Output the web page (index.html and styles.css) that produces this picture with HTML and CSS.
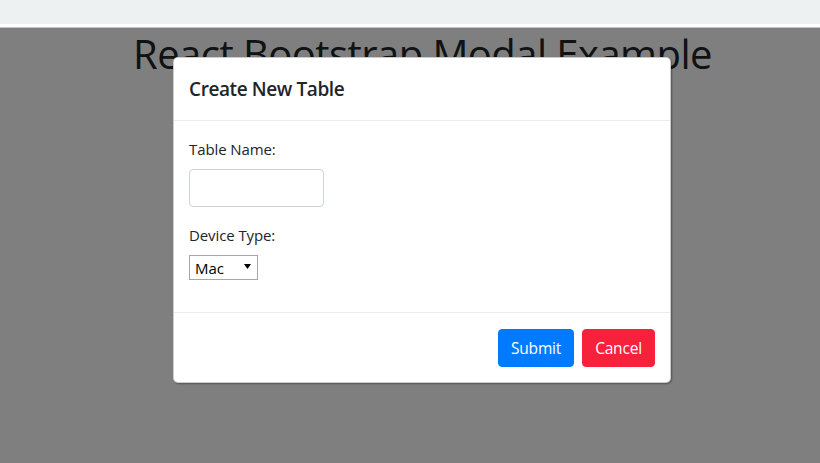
FILE: index.html
```html
<!DOCTYPE html>
<html lang="en">
<head>
<meta charset="utf-8">
<title>React Bootstrap Modal Example</title>
<link rel="stylesheet" href="styles.css">
</head>
<body>
<div class="topbar"></div>
<div class="stage">
  <h1 class="title">React Bootstrap Modal Example</h1>
  <div class="backdrop"></div>
  <div class="modal">
    <div class="modal-header">
      <h5 class="modal-title">Create New Table</h5>
    </div>
    <div class="modal-body">
      <div class="form-group">
        <label class="label" for="tname">Table Name:</label>
        <input class="text-input" id="tname" type="text">
      </div>
      <div class="form-group">
        <label class="label" for="dtype">Device Type:</label>
        <span class="select-wrap">
          <select class="select" id="dtype">
            <option>Mac</option>
            <option>Windows</option>
            <option>Linux</option>
          </select>
          <svg class="select-arrow" width="7" height="5" viewBox="0 0 7 5"><path d="M0 0H7L3.5 5Z" fill="#000"/></svg>
        </span>
      </div>
    </div>
    <div class="modal-footer">
      <button class="btn btn-primary" type="button">Submit</button>
      <button class="btn btn-danger" type="button">Cancel</button>
    </div>
  </div>
</div>
</body>
</html>
```
FILE: styles.css
```css
html, body {
  margin: 0;
  padding: 0;
  height: 100%;
  overflow: hidden;
}
body {
  font-family: "Open Sans", "Noto Sans", sans-serif;
  color: #212529;
  background: #fff;
}
.topbar {
  height: 24px;
  background: #eef1f2;
  border-bottom: 3px solid #fff;
}
.stage {
  position: relative;
  height: calc(100% - 27px);
  background: #fff;
  border-top: 1px solid #c4c4c4;
  box-sizing: border-box;
}
.title {
  margin: 0;
  padding: 2px 0 0 25px;
  text-align: center;
  font-size: 40px;
  font-weight: 400;
  line-height: 48px;
  letter-spacing: -0.55px;
  color: #212529;
}
.backdrop {
  position: absolute;
  inset: 0;
  background: rgba(0, 0, 0, 0.5);
}
.modal {
  position: absolute;
  top: 29px;
  left: 173px;
  width: 498px;
  background: #fff;
  border: 1px solid rgba(0, 0, 0, 0.2);
  border-radius: 5px;
  box-sizing: border-box;
  box-shadow: 1px 1px 2px rgba(0, 0, 0, 0.35);
}
.modal-header {
  padding: 16px 15px;
  border-bottom: 1px solid #e9ecef;
}
.modal-title {
  margin: 0;
  font-size: 19px;
  font-weight: 600;
  line-height: 30px;
  letter-spacing: -0.4px;
}
.modal-body {
  padding: 16px 15px;
}
.form-group {
  margin-bottom: 16px;
}
.label {
  display: block;
  margin-bottom: 8px;
  font-size: 15px;
  line-height: 24px;
  letter-spacing: -0.1px;
}
.text-input {
  display: block;
  box-sizing: border-box;
  width: 135px;
  height: 38px;
  padding: 6px 12px;
  border: 1px solid #ced4da;
  border-radius: 4px;
  font: inherit;
}
.select-wrap {
  position: relative;
  display: inline-block;
  vertical-align: top;
}
.select {
  -webkit-appearance: none;
  appearance: none;
  display: block;
  box-sizing: border-box;
  width: 69px;
  height: 25px;
  padding: 0 0 0 5px;
  border: 1px solid #a6a6a6;
  border-radius: 0;
  background: #fff;
  font-family: "Open Sans", "Noto Sans", sans-serif;
  font-size: 15px;
  color: #000;
}
.select-arrow {
  position: absolute;
  right: 7px;
  top: 9px;
  pointer-events: none;
}
.modal-footer {
  display: flex;
  justify-content: flex-end;
  gap: 8px;
  padding: 16px 15px 15px;
  border-top: 1px solid #e9ecef;
}
.btn {
  box-sizing: border-box;
  height: 38px;
  padding: 0 12px;
  border: 1px solid transparent;
  border-radius: 4px;
  font-family: inherit;
  font-size: 15.5px;
  letter-spacing: -0.2px;
  color: #fff;
  cursor: pointer;
}
.btn-primary {
  width: 76px;
  background: #007bff;
  border-color: #007bff;
}
.btn-danger {
  width: 73px;
  background: #f8213b;
  border-color: #f8213b;
}
```
